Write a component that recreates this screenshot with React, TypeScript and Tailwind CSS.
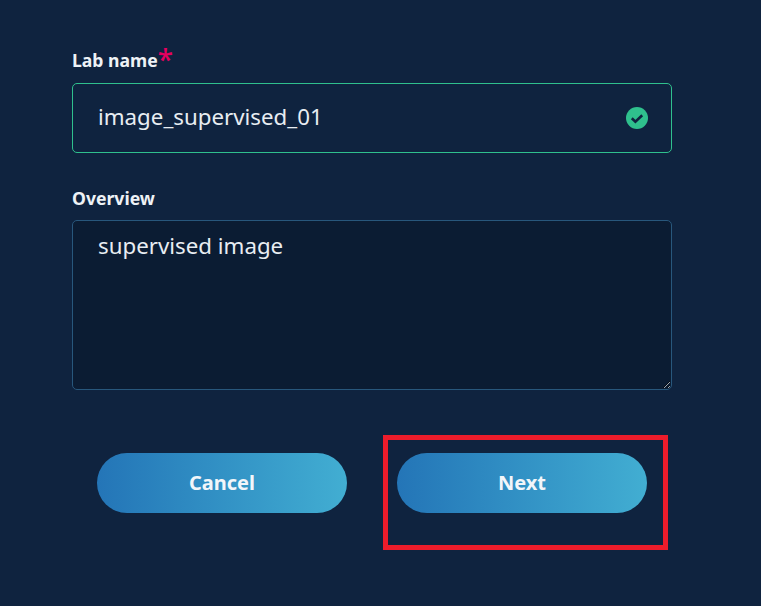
export default function App() {
  const font = "font-['Noto_Sans',sans-serif]";
  return (
    <div className={`relative min-h-[606px] w-full overflow-hidden bg-[#0f233f] ${font}`}>
      <div className="flex w-[600px] flex-col pl-0 pt-[47px] ml-[72px]">
        <label className="flex h-[26px] items-start text-[17.6px] leading-[26px] font-bold text-[#eef2f6]">
          Lab name
          <span className="-mt-[2px] text-[28px] leading-[28px] font-medium text-[#e6005f]">*</span>
        </label>
        <div className="relative mt-[10px] h-[70px] w-full">
          <input
            readOnly
            value="image_supervised_01"
            className="h-full w-full rounded-[5px] border border-[#2fc08d] bg-transparent pb-[3px] pl-[25px] pr-[50px] text-[22.3px] text-[#e8edf2] outline-none"
          />
          <svg viewBox="0 0 22 22" className="absolute right-[24px] top-[24px] h-[22px] w-[22px]">
            <circle cx="11" cy="11" r="11" fill="#2fc08d" />
            <path d="M5.8 11.2 L9.4 14.6 L16.2 8.2" fill="none" stroke="#0f233f" strokeWidth="2.6" />
          </svg>
        </div>
        <label className="mt-[32px] h-[26px] text-[17.6px] leading-[26px] font-bold text-[#eef2f6]">
          Overview
        </label>
        <textarea
          readOnly
          defaultValue="supervised image"
          className="mt-[9px] block h-[170px] min-h-[170px] w-full rounded-[5px] border border-[#28577c] bg-[#0b1c33] px-[25px] py-[7px] text-[22.3px] leading-[36px] text-[#e8edf2] outline-none"
        />
        <div className="mt-[63px] flex gap-[50px] pl-[25px]">
          <button className="h-[60px] w-[250px] rounded-full bg-gradient-to-r from-[#2475b7] to-[#42aed2] text-[20px] font-bold text-[#f2f6fa]">
            Cancel
          </button>
          <button className="h-[60px] w-[250px] rounded-full bg-gradient-to-r from-[#2475b7] to-[#42aed2] text-[20px] font-bold text-[#f2f6fa]">
            Next
          </button>
        </div>
      </div>
      <div className="pointer-events-none absolute left-[383px] top-[435px] h-[115px] w-[285px] border-[5px] border-[#ed1c2b]" />
    </div>
  );
}
